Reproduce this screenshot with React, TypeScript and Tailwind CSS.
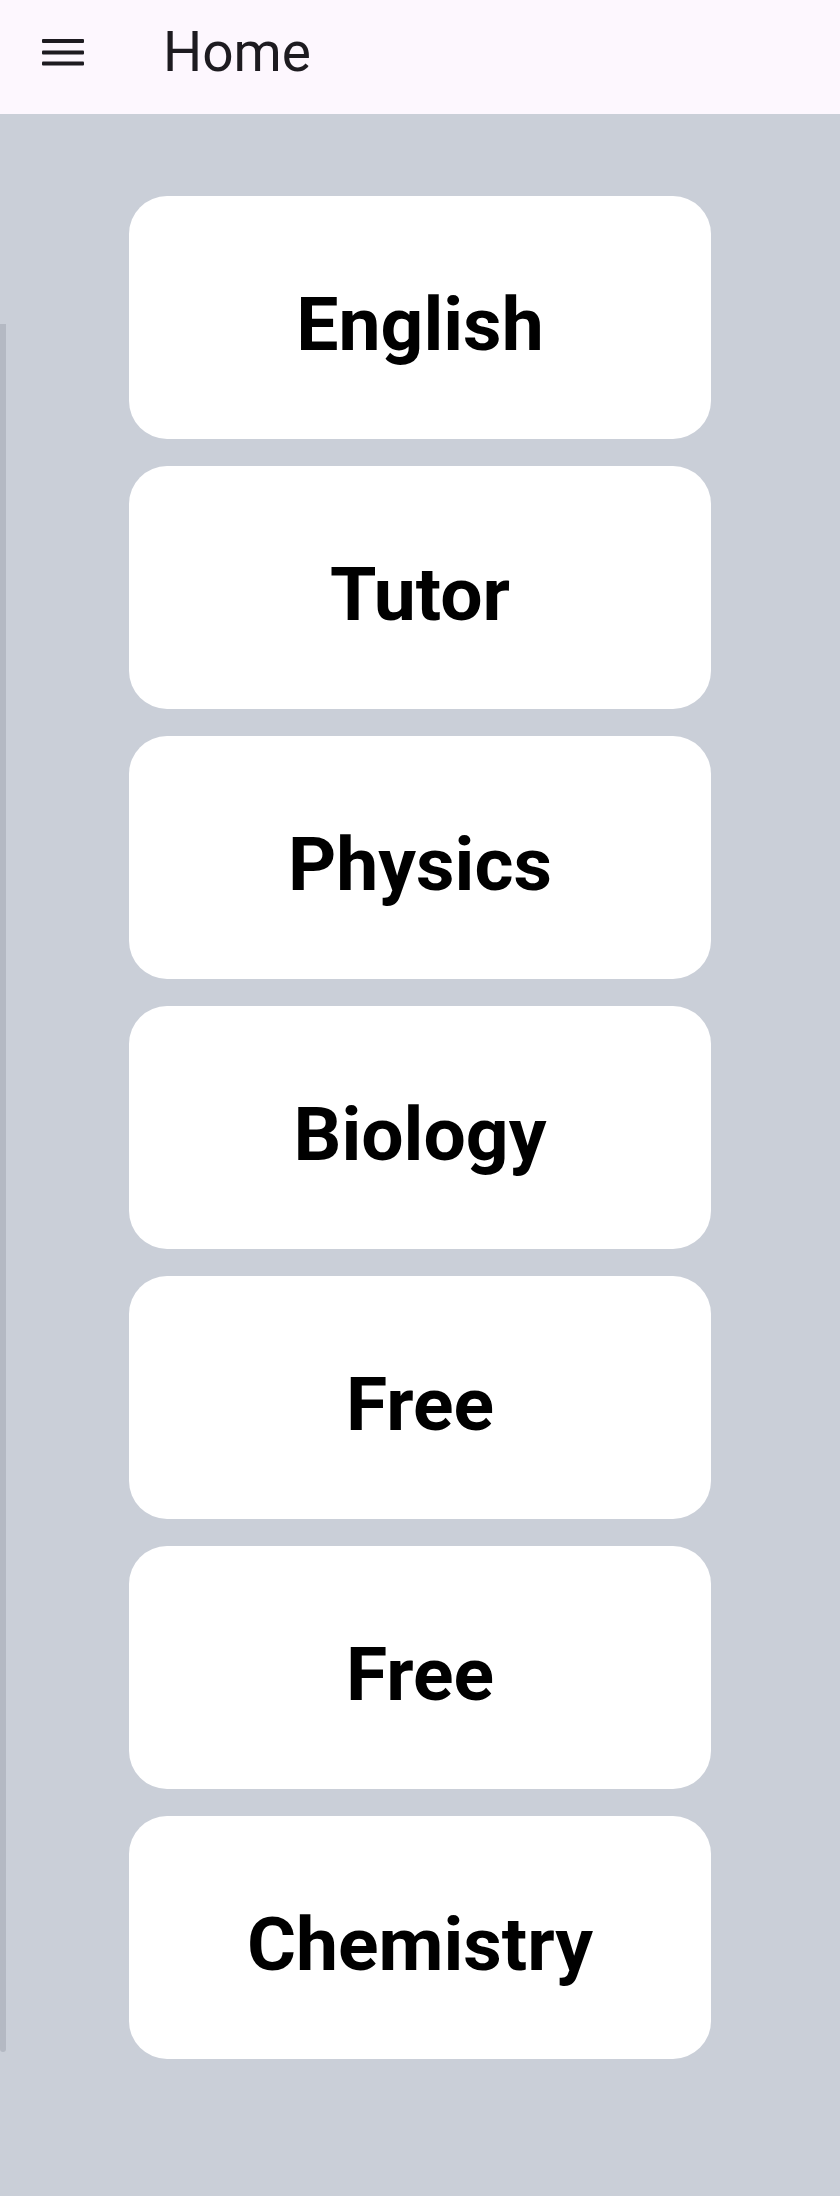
import React from "react";

const subjects = ["English", "Tutor", "Physics", "Biology", "Free", "Free", "Chemistry"];

function MenuIcon() {
  return (
    <svg width="42" height="27" viewBox="0 0 42 27" className="block">
      <rect x="0" y="0" width="42" height="4" rx="1" fill="#1d1b20" />
      <rect x="0" y="11.5" width="42" height="4" rx="1" fill="#1d1b20" />
      <rect x="0" y="22.5" width="42" height="4" rx="1" fill="#1d1b20" />
    </svg>
  );
}

export default function App() {
  return (
    <div
      className="relative min-h-[2196px] w-full bg-[#cacfd8]"
      style={{ fontFamily: "Roboto, 'Noto Sans', sans-serif" }}
    >
      <header className="flex h-[114px] items-center bg-[#fdf7fe] pb-[9px]">
        <div className="ml-[42px] flex items-center">
          <MenuIcon />
        </div>
        <h1 className="ml-[79px] text-[55px] leading-none font-normal text-[#1d1b20]">Home</h1>
      </header>

      <div className="absolute left-0 top-[324px] h-[1728px] w-[6px] rounded-b-[3px] bg-[#b4b9c3]" />

      <main className="flex flex-col items-center gap-[27px] pt-[82px] pb-[136px]">
        {subjects.map((s, i) => (
          <div
            key={i}
            className="flex h-[243px] w-[582px] items-center justify-center rounded-[38px] bg-white pt-[14px]"
          >
            <span className="text-[75px] leading-none font-bold text-black">{s}</span>
          </div>
        ))}
      </main>
    </div>
  );
}
